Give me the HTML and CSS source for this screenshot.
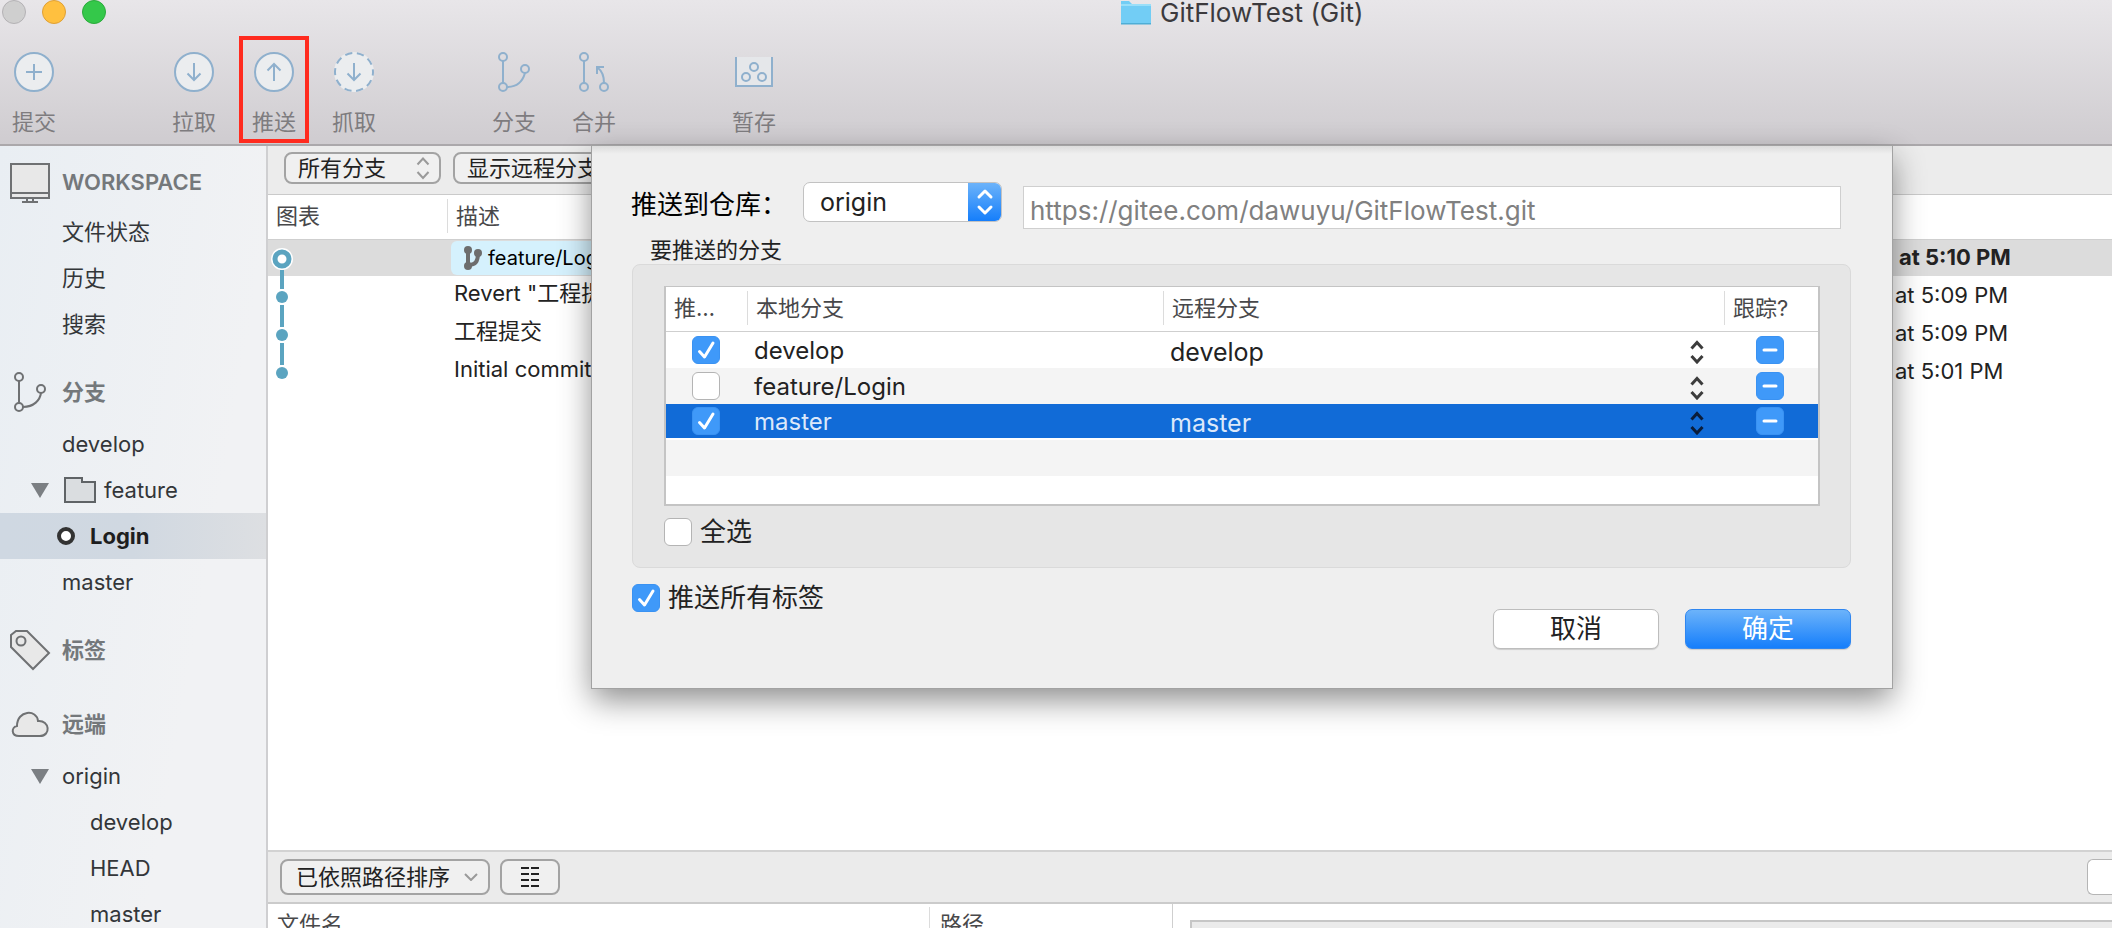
FILE: index.html
```html
<!DOCTYPE html>
<html lang="zh-CN">
<head>
<meta charset="utf-8">
<title>GitFlowTest (Git)</title>
<link rel="stylesheet" href="styles.css">
</head>
<body>
<svg class="defs" width="0" height="0" aria-hidden="true">
  <symbol id="updown" viewBox="0 0 14 24"><path d="M1.5 8.5 7 2.5l5.5 6M1.5 16l5.5 6 5.5-6"/></symbol>
  <symbol id="tick" viewBox="0 0 28 28"><path d="M7.5 15.5l5 5.5 8.500-14"/></symbol>
  <symbol id="dash" viewBox="0 0 28 28"><path d="M8 14h12"/></symbol>
</svg>

<header class="titlebar">
  <div class="lights"><i class="light off"></i><i class="light amber"></i><i class="light green"></i></div>
  <h1 class="title">
    <svg width="30" height="26" viewBox="0 0 30 26"><path d="M0 1h8l3 3h19v20H0z" fill="#72cdf5"/><path d="M0 4h30v2H0z" fill="#9adff9"/><path d="M0 23h30v1.500H0z" fill="#4faed6"/></svg>
    GitFlowTest (Git)
  </h1>
  <nav class="toolbar">
    <button class="tool">
      <svg width="40" height="40" viewBox="0 0 40 40"><circle cx="20" cy="20" r="19" fill="#ebedef"/><path d="M20 12v16M12 20h16"/></svg>提交</button>
    <button class="tool split">
      <svg width="40" height="40" viewBox="0 0 40 40"><circle cx="20" cy="20" r="19" fill="#ebedef"/><path d="M20 11v17M13.500 21.500l6.500 6.500 6.500-6.500"/></svg>拉取</button>
    <button class="tool marked">
      <svg width="40" height="40" viewBox="0 0 40 40"><circle cx="20" cy="20" r="19" fill="#ebedef"/><path d="M20 29V12M13.500 18.500l6.500-6.500 6.500 6.500"/></svg>推送</button>
    <button class="tool">
      <svg width="40" height="40" viewBox="0 0 40 40"><circle cx="20" cy="20" r="20" fill="#ebedef" stroke="none"/><circle cx="20" cy="20" r="19" stroke-dasharray="7.200 4.740" stroke-dashoffset="3.600"/><path d="M20 11v17M13.500 21.500l6.500 6.500 6.500-6.500"/></svg>抓取</button>
    <button class="tool split">
      <svg width="40" height="40" viewBox="0 0 40 40"><path d="M9 9v22M13 35c12 0 16-7 18-14"/><circle cx="9" cy="5" r="4"/><circle cx="9" cy="35" r="4"/><circle cx="31" cy="17" r="4"/></svg>分支</button>
    <button class="tool">
      <svg width="40" height="40" viewBox="0 0 40 40"><path d="M10 9v22M30 31c0-7-2-12-6-15M30 15h-7v7"/><circle cx="10" cy="5" r="4"/><circle cx="10" cy="35" r="4"/><circle cx="30" cy="35" r="4"/></svg>合并</button>
    <button class="tool split">
      <svg width="40" height="40" viewBox="0 0 40 40"><path d="M2 5v29h36V5" fill="#e5e7ea"/><circle cx="20" cy="15" r="4"/><circle cx="12" cy="25" r="4"/><circle cx="28" cy="25" r="4"/></svg>暂存</button>
  </nav>
</header>

<div class="workspace">
  <aside class="sidebar">
    <section>
      <h2><svg width="40" height="40" viewBox="0 0 40 40"><path d="M1 2h38v34H1z" fill="#e8e8e8"/><path d="M1 31h38M17 36v3M23 36v3M12 40h16"/></svg>WORKSPACE</h2>
      <a href="#">文件状态</a>
      <a href="#">历史</a>
      <a href="#">搜索</a>
    </section>
    <section>
      <h2><svg width="40" height="40" viewBox="0 0 40 40"><path d="M9 9v22M13 35c11 0 17-7 18-14"/><circle cx="9" cy="5" r="4"/><circle cx="9" cy="35" r="4"/><circle cx="31" cy="17" r="4"/></svg>分支</h2>
      <a href="#">develop</a>
      <a href="#" class="branch"><svg class="fold" width="18" height="15" viewBox="0 0 18 15"><path d="M0 0h18L9 15z"/></svg><svg width="32" height="28" viewBox="0 0 32 28"><path d="M1 2h17v4h13v20H1z" fill="#dadde0"/></svg>feature</a>
      <a href="#" class="current"><svg width="18" height="18" viewBox="0 0 18 18"><circle cx="9" cy="9" r="7"/></svg>Login</a>
      <a href="#">master</a>
    </section>
    <section>
      <h2><svg width="40" height="40" viewBox="0 0 40 40"><path d="M1 5l5-4h11l22 22-16 16L1 17z" fill="#e8e8e8"/><circle cx="11" cy="11" r="4.500"/></svg>标签</h2>
    </section>
    <section>
      <h2><svg width="40" height="40" viewBox="0 0 40 40"><path d="M9 32c-8 0-8-9-2-10 0-16 20-17 21-5 12-1 13 15 2 15z" fill="#e8e8e8"/></svg>远端</h2>
      <a href="#" class="branch"><svg class="fold" width="18" height="15" viewBox="0 0 18 15"><path d="M0 0h18L9 15z"/></svg>origin</a>
      <a href="#" class="deep">develop</a>
      <a href="#" class="deep">HEAD</a>
      <a href="#" class="deep">master</a>
    </section>
  </aside>

  <main class="main">
    <div class="filters">
      <span class="pill scope"><select aria-label="分支范围"><option>所有分支</option></select><svg class="arrow" width="14" height="24"><use href="#updown"/></svg></span>
      <span class="pill remote"><select aria-label="远程分支"><option>显示远程分支</option></select></span>
    </div>
    <div class="history">
      <table class="log">
        <colgroup><col class="graph"><col><col class="date"></colgroup>
        <thead><tr><th>图表</th><th><span class="rule">描述</span></th><th></th></tr></thead>
        <tbody>
          <tr class="head">
            <td><svg width="28" height="38" viewBox="0 0 28 38"><path d="M14 30v8"/><circle cx="14" cy="19" r="11" class="halo"/><circle cx="14" cy="19" r="7" class="ring"/></svg></td>
            <td><span class="tag"><svg width="20" height="26" viewBox="0 0 20 26"><path d="M5 6v14M5 20c8 0 10-4 10-12"/><circle cx="5" cy="5" r="4"/><circle cx="5" cy="21" r="4"/><circle cx="15" cy="8" r="4"/></svg>feature/Login</span></td>
            <td>at 5:10 PM</td>
          </tr>
          <tr>
            <td><svg width="28" height="38" viewBox="0 0 28 38"><path d="M14 0v11M14 27v11"/><circle cx="14" cy="19" r="6" class="dot"/></svg></td>
            <td>Revert "工程提交"</td><td>at 5:09 PM</td>
          </tr>
          <tr>
            <td><svg width="28" height="38" viewBox="0 0 28 38"><path d="M14 0v11M14 27v11"/><circle cx="14" cy="19" r="6" class="dot"/></svg></td>
            <td>工程提交</td><td>at 5:09 PM</td>
          </tr>
          <tr>
            <td><svg width="28" height="38" viewBox="0 0 28 38"><path d="M14 0v11"/><circle cx="14" cy="19" r="6" class="dot"/></svg></td>
            <td>Initial commit</td><td>at 5:01 PM</td>
          </tr>
        </tbody>
      </table>
    </div>
    <div class="sortbar">
      <span class="pill sort"><select aria-label="排序"><option>已依照路径排序</option></select><svg class="arrow" width="14" height="8" viewBox="0 0 14 8"><path d="M1 1l6 6 6-6"/></svg></span>
      <button class="listmode" aria-label="列表"><svg width="18" height="22" viewBox="0 0 18 22"><path d="M0 2h8M10 2h8M0 8h8M10 8h8M0 14h8M10 14h8M0 20h8M10 20h8"/></svg></button>
      <button class="edge" aria-label="更多"></button>
    </div>
    <div class="files">
      <div class="filehead"><span class="name">文件名</span><span class="rule">路径</span></div>
      <div class="diff"><div class="diffbox"></div></div>
    </div>
  </main>

  <form class="sheet">
    <div class="repo">
      <label for="repo">推送到仓库：</label>
      <span class="popup"><select id="repo"><option>origin</option></select><span class="knob"><svg width="18" height="30" viewBox="0 0 18 30"><path d="M3 10l6-6 6 6M3 20l6 6 6-6"/></svg></span></span>
      <input class="url" type="text" aria-label="仓库地址" value="https://gitee.com/dawuyu/GitFlowTest.git">
    </div>
    <p class="caption">要推送的分支</p>
    <div class="group">
      <table class="branches">
        <colgroup><col class="push"><col class="local"><col><col class="track"></colgroup>
        <thead><tr><th><span class="first">推…</span></th><th><span class="rule">本地分支</span></th><th><span class="rule">远程分支</span></th><th><span class="rule">跟踪?</span></th></tr></thead>
        <tbody>
          <tr>
            <td><span class="check"><input type="checkbox" aria-label="推送 develop" checked><svg width="28" height="28"><use href="#tick"/></svg></span></td>
            <td>develop</td>
            <td><span class="combo"><select aria-label="远程 develop"><option>develop</option></select><svg class="arrow" width="14" height="24"><use href="#updown"/></svg></span></td>
            <td><span class="check"><input type="checkbox" aria-label="跟踪 develop" checked><svg width="28" height="28"><use href="#dash"/></svg></span></td>
          </tr>
          <tr>
            <td><span class="check"><input type="checkbox" aria-label="推送 feature/Login"><svg width="28" height="28"><use href="#tick"/></svg></span></td>
            <td>feature/Login</td>
            <td><span class="combo"><select aria-label="远程 feature/Login"><option></option></select><svg class="arrow" width="14" height="24"><use href="#updown"/></svg></span></td>
            <td><span class="check"><input type="checkbox" aria-label="跟踪 feature/Login" checked><svg width="28" height="28"><use href="#dash"/></svg></span></td>
          </tr>
          <tr class="selected">
            <td><span class="check"><input type="checkbox" aria-label="推送 master" checked><svg width="28" height="28"><use href="#tick"/></svg></span></td>
            <td>master</td>
            <td><span class="combo"><select aria-label="远程 master"><option>master</option></select><svg class="arrow" width="14" height="24"><use href="#updown"/></svg></span></td>
            <td><span class="check"><input type="checkbox" aria-label="跟踪 master" checked><svg width="28" height="28"><use href="#dash"/></svg></span></td>
          </tr>
          <tr><td colspan="4"></td></tr>
          <tr class="last"><td colspan="4"></td></tr>
        </tbody>
      </table>
      <label class="option"><span class="check"><input type="checkbox"><svg width="28" height="28"><use href="#tick"/></svg></span>全选</label>
    </div>
    <div class="bottom">
      <label class="option"><span class="check"><input type="checkbox" checked><svg width="28" height="28"><use href="#tick"/></svg></span>推送所有标签</label>
      <div class="actions">
        <button type="button" class="push-button">取消</button>
        <button type="button" class="push-button primary">确定</button>
      </div>
    </div>
  </form>
</div>
</body>
</html>
```

FILE: styles.css
```css
* { box-sizing: border-box; }

body {
  margin: 0;
  height: 100vh;
  display: flex;
  flex-direction: column;
  overflow: hidden;
  background: #fff;
  color: #222;
  font: 22px/28px Inter, "Noto Sans CJK SC", sans-serif;
}

button, select, input { font: inherit; color: inherit; margin: 0; }
select { appearance: none; border: 0; background: none; padding: 0; }
svg { fill: none; flex: none; }
.defs { position: absolute; }

/* Title bar and toolbar */
.titlebar {
  flex: none;
  height: 146px;
  display: grid;
  grid-template-columns: 1fr;
  grid-template-rows: 36px 1fr;
  border-bottom: 2px solid #aba8ab;
  background: linear-gradient(#e8e6e9, #cfccd0);
}
.lights, .title { grid-area: 1 / 1; }
.lights { display: flex; gap: 16px; padding-left: 2px; }
.light { width: 24px; height: 24px; border-radius: 50%; border: 1px solid; }
.off { background: #cfcfcf; border-color: #b4b2b5; }
.amber { background: #ffc03f; border-color: #dfa036; }
.green { background: #34c84a; border-color: #2aaa3b; }
.title {
  margin: 0 0 0 1121px;
  display: flex;
  gap: 9px;
  align-items: flex-start;
  font-size: 26px;
  line-height: 26px;
  font-weight: 400;
  color: #3c3a3d;
}
.toolbar { display: flex; align-items: flex-start; margin-left: -1px; }
.tool {
  width: 70px;
  height: 107px;
  margin-right: 10px;
  padding: 12px 0 0;
  border: 4px solid transparent;
  background: none;
  display: flex;
  flex-direction: column;
  align-items: center;
  gap: 16px;
  color: #7e7c7f;
}
.tool svg { stroke: #8fb0cd; stroke-width: 2; }
.tool.split { margin-left: 80px; }
.marked { border-color: #ff2b1f; }

/* Main body */
.workspace { flex: 1; display: flex; min-height: 0; position: relative; }

.sidebar {
  flex: none;
  width: 268px;
  padding-top: 5px;
  overflow: hidden;
  border-right: 2px solid #cfcfd1;
  background: linear-gradient(100deg, #e9eef3, #f1f2f4 70%);
}
.sidebar section { padding-bottom: 16px; }
.sidebar h2 {
  margin: 0;
  height: 58px;
  padding-left: 10px;
  display: flex;
  align-items: center;
  gap: 12px;
  font-size: 22px;
  font-weight: 600;
  color: #74787b;
}
.sidebar section:first-child h2 { padding-top: 4px; }
.sidebar h2 svg { stroke: #6f7173; stroke-width: 2; overflow: visible; }
.sidebar a {
  height: 46px;
  padding-left: 62px;
  display: flex;
  align-items: center;
  color: #333639;
  text-decoration: none;
}
.sidebar .branch { padding-left: 31px; gap: 13px; }
.branch svg { stroke: #5f6366; stroke-width: 2; margin-right: -5px; }
.branch .fold { fill: #7b7f83; stroke: none; margin-right: 0; }
.branch .fold + svg { margin-left: 2px; }
.sidebar .deep { padding-left: 90px; }
.sidebar .current {
  padding-left: 57px;
  gap: 15px;
  font-weight: 700;
  color: #1e1e1e;
  background: linear-gradient(90deg, #cfd8e2, #d0d8e1 50%, #dddfe2);
}
.current svg { fill: #fff; stroke: #333; stroke-width: 4; }

.main { flex: 1; display: flex; flex-direction: column; min-width: 0; }
.filters {
  flex: none;
  height: 49px;
  padding: 6px 16px;
  display: flex;
  gap: 12px;
  background: #ececec;
  border-bottom: 1px solid #cacaca;
}
.pill {
  display: grid;
  align-items: center;
  border: 2px solid #a3a3a3;
  border-radius: 8px;
  background: #f0f0f0;
}
.pill > * { grid-area: 1 / 1; }
.pill select { height: 100%; padding-left: 12px; }
.arrow { justify-self: end; pointer-events: none; stroke: #9a9a9a; stroke-width: 2; }
.scope { width: 157px; height: 32px; }
.scope .arrow { margin-right: 9px; }
.remote { width: 200px; height: 32px; }

.history { flex: 1; overflow: hidden; }
table { width: 100%; table-layout: fixed; border-collapse: separate; border-spacing: 0; }
th, td { padding: 0; text-align: left; font-weight: 400; white-space: nowrap; overflow: hidden; }
th { color: #48484a; height: 45px; padding-bottom: 2px; border-bottom: 1px solid #cfcfcf; }
.rule { display: block; height: 34px; padding-left: 8px; line-height: 34px; border-left: 1px solid #dcdcdc; }
.log .graph { width: 179px; }
.log .date { width: 219px; }
.log th:first-child { padding-left: 8px; }
.log td { height: 38px; padding: 0 0 8px 7px; }
.log td:first-child { padding: 0; }
.log td:last-child { padding: 0 0 4px 2px; }
.log td svg { display: block; stroke: #5ba4c0; stroke-width: 4; }
.log .dot { fill: #5ba4c0; stroke: none; }
.log .halo { fill: #fff; stroke: none; }
.log .ring { fill: #fff; stroke-width: 5; }
.log .head td { background: linear-gradient(#dcdcdc 36px, #fff 36px); font-weight: 700; }
.log .head td:nth-child(2) { padding: 0 0 2px 4px; }
.log .head td:last-child { padding-left: 6px; }
.tag {
  display: flex;
  align-items: center;
  gap: 5px;
  width: 200px;
  height: 34px;
  padding-left: 12px;
  border-radius: 6px;
  background: #d5f1fd;
  color: #000;
  font-size: 20px;
  font-weight: 400;
}
.log .tag svg { fill: #6d6d6d; stroke: none; }
.tag path { fill: none; stroke: #6d6d6d; stroke-width: 4; }

.sortbar {
  flex: none;
  height: 54px;
  padding-left: 12px;
  display: flex;
  align-items: center;
  gap: 10px;
  background: #ebebeb;
  border-top: 2px solid #d2d2d2;
  border-bottom: 2px solid #cbcbcb;
}
.sort { width: 210px; height: 36px; }
.sort select { padding-left: 14px; }
.sort .arrow { margin-right: 10px; }
.listmode { width: 60px; height: 36px; padding: 0; border: 2px solid #a3a3a3; border-radius: 8px; background: #f0f0f0; }
.listmode svg { display: block; margin: auto; stroke: #222; stroke-width: 2; }
.edge { width: 25px; height: 36px; margin-left: auto; border: 1px solid #b5b5b5; border-right: 0; border-radius: 6px 0 0 6px; background: #fff; }
.files { flex: none; height: 24px; display: flex; overflow: hidden; }
.filehead { width: 905px; height: 44px; padding-top: 3px; display: flex; line-height: 34px; color: #48484a; border-right: 1px solid #cfcfcf; }
.name { width: 661px; padding-left: 9px; }
.filehead .rule { padding-left: 10px; }
.diff { flex: 1; padding: 16px 0 0 17px; }
.diffbox { height: 40px; background: #ebebeb; border: 2px solid #c6c6c6; border-right: 0; }

/* Push sheet */
.sheet {
  position: absolute;
  top: 0;
  left: 592px;
  right: 220px;
  padding: 36px 41px 39px 40px;
  background: linear-gradient(#dcdcdc, #efefef 8px);
  box-shadow: 0 0 0 1px #a2a2a2, 0 12px 30px rgba(0, 0, 0, .45);
  font-size: 26px;
}
.repo { display: flex; align-items: flex-start; }
.repo label { width: 172px; margin-left: -1px; line-height: 46px; color: #000; }
.popup {
  width: 199px;
  height: 40px;
  display: grid;
  overflow: hidden;
  border: 1px solid #c2c2c2;
  border-radius: 7px;
  background: #fff;
}
.popup > * { grid-area: 1 / 1; }
.popup select { padding-left: 16px; font-size: 25px; }
.knob { justify-self: end; width: 33px; display: grid; place-items: center; background: linear-gradient(#6cb3fa, #157efb); pointer-events: none; }
.knob svg { stroke: #fff; stroke-width: 3; stroke-linecap: round; stroke-linejoin: round; }
.url {
  flex: 1;
  height: 43px;
  margin: 4px 10px 0 21px;
  padding: 6px 6px 0;
  border: 1px solid #cfcfcf;
  background: #fff;
  color: #808080;
}
.caption { margin: 7px 0 0 18px; font-size: 22px; }
.group {
  margin-top: 0;
  padding: 21px 30px 21px 31px;
  height: 304px;
  border: 1px solid #dadada;
  border-radius: 8px;
  background: #e6e6e6;
}
.branches { border: 2px solid #c4c4c4; border-top-width: 1px; background: #fff; font-size: 22px; }
.push { width: 81px; }
.local { width: 416px; }
.track { width: 94px; }
.branches .first { padding-left: 8px; }
.branches td { height: 36px; padding: 2px 0 0 7px; font-size: 24px; }
.branches td:first-child { padding: 0 0 0 26px; }
.branches td:last-child { padding: 0 0 0 32px; }
.branches tbody tr:nth-child(even) { background: #f4f4f4; }
.branches .selected td { background: #116bd7; color: #dce8fa; border-bottom: 2px solid #fff; }
.branches .last td { height: 28px; }
.check { display: grid; width: 28px; height: 28px; }
.check > * { grid-area: 1 / 1; }
.check input {
  appearance: none;
  width: 28px;
  height: 28px;
  border: 1px solid #b4b4b4;
  border-radius: 6px;
  background: #fff;
}
.check input:checked { background: #3f99f9; border-color: #3a92f2; }
.check svg { pointer-events: none; stroke: #fff; stroke-width: 3; stroke-linecap: round; stroke-linejoin: round; }
.check input:not(:checked) + svg { visibility: hidden; }
.combo { display: grid; align-items: center; height: 32px; padding-top: 2px; }
.combo > * { grid-area: 1 / 1; }
.combo select { font-size: 25px; line-height: 30px; }
.combo .arrow { margin-right: 20px; stroke: #3c3c3c; stroke-width: 3; }
.selected .arrow { stroke: #0b1d3a; }
.option { display: flex; align-items: center; gap: 8px; }
.group .option { margin-top: 12px; }
.bottom { display: flex; justify-content: space-between; align-items: flex-start; padding-top: 16px; }
.actions { display: flex; gap: 26px; padding-top: 25px; }
.push-button {
  width: 166px;
  height: 40px;
  padding: 0;
  line-height: 36px;
  border: 1px solid #bdbdbd;
  border-radius: 7px;
  background: #fff;
  box-shadow: 0 1px 1px rgba(0, 0, 0, .15);
}
.primary { color: #fff; border-color: #2f86f0; background: linear-gradient(#6cb3fa, #157efb); }
```
